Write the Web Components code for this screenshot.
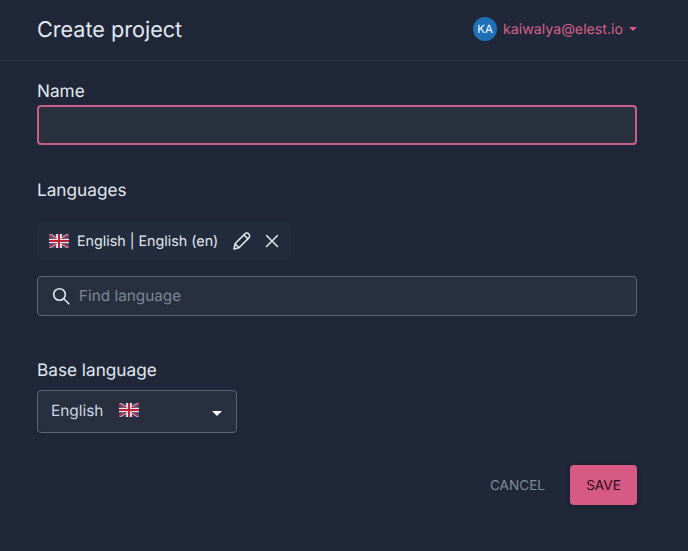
<!DOCTYPE html>
<html>
<head>
<meta charset="utf-8">
<style>
  html, body { margin: 0; height: 100%; background: #1f2738; }
  body { font-family: Inter, "Liberation Sans", sans-serif; color: #e2e8f0; text-rendering: geometricPrecision; }
  .base { margin-top: 9px; }
</style>
</head>
<body>
<create-project-page>
  <app-header slot="header" title-text="Create project" email="kaiwalya@elest.io" initials="KA"></app-header>
  <form-field label="Name"><name-input></name-input></form-field>
  <form-field label="Languages">
    <language-chip text="English | English (en)"></language-chip>
    <search-input placeholder="Find language"></search-input>
  </form-field>
  <form-field class="base" label="Base language"><language-select value="English"></language-select></form-field>
  <form-actions></form-actions>
</create-project-page>

<script>
const FLAG = `<svg viewBox="0 0 60 42" width="20" height="14" style="display:block;flex:none;filter:blur(.3px)">
  <rect width="60" height="42" fill="#e3cdd7"/>
  <path d="M0 2l60 38M60 2L0 40" stroke="#b3293f" stroke-width="5"/>
  <path d="M24 0h12v15h24v12H36v15H24V27H0V15h24z" fill="#efe2e8"/>
  <path d="M27 0h6v18h27v6H33v18h-6V24H0v-6h27z" fill="#b8233c"/>
  <path d="M6 0h15v10zM39 0h15L39 10zM0 5l15 9H0zM60 5L45 14h15zM0 37l15-9H0zM60 37l-15-9h15zM6 42h15V32zM39 42h15L39 32z" fill="#33406f"/>
</svg>`;

class CreateProjectPage extends HTMLElement {
  connectedCallback() {
    const shadow = this.attachShadow({ mode: "open" });
    shadow.innerHTML = `
      <style>
        :host { display: block; }
        main { display: flex; flex-direction: column; gap: 34px; padding: 19px 51px 0 37px; }
      </style>
      <slot name="header"></slot>
      <main><slot></slot></main>
    `;
  }
}

class AppHeader extends HTMLElement {
  connectedCallback() {
    const shadow = this.attachShadow({ mode: "open" });
    shadow.innerHTML = `
      <style>
        :host {
          display: flex;
          align-items: center;
          justify-content: space-between;
          box-sizing: border-box;
          height: 61px;
          padding: 0 51px 2px 37px;
          border-bottom: 1px solid #2d3748;
        }
        h1 { margin: 2px 0 0; font-size: 21.6px; font-weight: 400; color: #e2e8f0; }
        .user { display: flex; align-items: center; color: #d6608a; font-size: 14.2px; }
        .avatar {
          display: flex; align-items: center; justify-content: center;
          width: 24px; height: 24px; margin-right: 6px;
          border-radius: 50%; background: #2070b8; color: #fff; font-size: 11.5px;
        }
        .caret {
          margin-left: 6px; width: 0; height: 0;
          border: 4px solid transparent; border-top-color: #e0588a; border-bottom: 0;
        }
      </style>
      <h1>${this.getAttribute("title-text")}</h1>
      <div class="user">
        <span class="avatar">${this.getAttribute("initials")}</span>
        <span>${this.getAttribute("email")}</span>
        <span class="caret"></span>
      </div>
    `;
  }
}

class FormField extends HTMLElement {
  connectedCallback() {
    const shadow = this.attachShadow({ mode: "open" });
    shadow.innerHTML = `
      <style>
        :host { display: block; }
        label { display: block; height: 25px; line-height: 24px; font-size: 17.2px; color: #e2e8f0; }
      </style>
      <label>${this.getAttribute("label")}</label>
      <slot></slot>
    `;
  }
}

class NameInput extends HTMLElement {
  connectedCallback() {
    const shadow = this.attachShadow({ mode: "open" });
    shadow.innerHTML = `
      <style>
        :host {
          display: block; box-sizing: border-box; height: 40px;
          background: #2a313e; border: 2px solid #c75f88; border-radius: 4px;
        }
      </style>
    `;
  }
}

class LanguageChip extends HTMLElement {
  connectedCallback() {
    const shadow = this.attachShadow({ mode: "open" });
    shadow.innerHTML = `
      <style>
        :host {
          display: flex; width: fit-content; align-items: center; box-sizing: border-box;
          height: 38px; margin: 18px 0 16px; padding: 0 12px;
          background: #232c3d; border-radius: 4px; font-size: 14.3px; color: #e2e8f0;
        }
        .text { margin-left: 8px; margin-right: 14px; }
        svg.i { display: block; fill: none; stroke: #e2e8f0; stroke-width: 1.5; stroke-linecap: round; stroke-linejoin: round; }
      </style>
      ${FLAG}
      <span class="text">${this.getAttribute("text")}</span>
      <svg class="i" width="20" height="20" viewBox="0 0 20 20">
        <path d="M2 18l1-5.200L12.900 2.900c1.100-1.100 2.800-1.100 3.900.1 1.100 1.100 1.100 2.800 0 3.900L7 16.800 2 18zM3 12.800L7 16.800M12 4l4 4"/>
      </svg>
      <svg class="i" style="margin-left:13px" width="14" height="14" viewBox="0 0 14 14">
        <path d="M1.500 1.500l11 11M12.500 1.500l-11 11"/>
      </svg>
    `;
  }
}

class SearchInput extends HTMLElement {
  connectedCallback() {
    const shadow = this.attachShadow({ mode: "open" });
    shadow.innerHTML = `
      <style>
        :host {
          display: flex; align-items: center; box-sizing: border-box; height: 40px;
          padding-left: 14px; background: #283040;
          border: 1px solid #5b6472; border-radius: 4px;
        }
        svg { display: block; margin-right: 9px; fill: none; stroke: #e2e8f0; stroke-width: 1.6; stroke-linecap: round; }
        span { font-size: 15.3px; color: #7d8794; padding-bottom: 1px; }
      </style>
      <svg width="18" height="18" viewBox="0 0 18 18">
        <circle cx="7.500" cy="7.500" r="5.800"/><path d="M11.800 11.800l5 5"/>
      </svg>
      <span>${this.getAttribute("placeholder")}</span>
    `;
  }
}

class LanguageSelect extends HTMLElement {
  connectedCallback() {
    const shadow = this.attachShadow({ mode: "open" });
    shadow.innerHTML = `
      <style>
        :host {
          display: flex; align-items: center; box-sizing: border-box;
          width: 200px; height: 43px; margin-top: 6px; padding: 0 14px 0 13px;
          background: #283040; border: 1px solid #5b6472; border-radius: 4px;
          font-size: 15.4px; color: #cbd5e0;
        }
        .text { margin-right: 16px; padding-bottom: 2px; }
        svg { margin-top: -3px; }
        .caret {
          margin-left: auto; width: 0; height: 0; margin-top: 3px;
          border: 5px solid transparent; border-top-color: #fff; border-bottom: 0;
        }
      </style>
      <span class="text">${this.getAttribute("value")}</span>
      ${FLAG}
      <span class="caret"></span>
    `;
  }
}

class FormActions extends HTMLElement {
  connectedCallback() {
    const shadow = this.attachShadow({ mode: "open" });
    shadow.innerHTML = `
      <style>
        :host { display: flex; justify-content: flex-end; align-items: center; margin-top: -2px; }
        button {
          box-sizing: border-box; height: 40px; border: 0; border-radius: 4px; padding: 1px 0 0;
          font: 400 13.6px Inter, "Liberation Sans", sans-serif; cursor: pointer;
          text-rendering: geometricPrecision;
        }
        .cancel { background: none; color: #7f8a99; margin-right: 25px; }
        .save {
          width: 67px; background: #d75a84; color: #2e0b1a;
          box-shadow: 0 2px 4px rgba(0,0,0,.25);
        }
      </style>
      <button class="cancel">CANCEL</button>
      <button class="save">SAVE</button>
    `;
  }
}

customElements.define("create-project-page", CreateProjectPage);
customElements.define("app-header", AppHeader);
customElements.define("form-field", FormField);
customElements.define("name-input", NameInput);
customElements.define("language-chip", LanguageChip);
customElements.define("search-input", SearchInput);
customElements.define("language-select", LanguageSelect);
customElements.define("form-actions", FormActions);
</script>
</body>
</html>
